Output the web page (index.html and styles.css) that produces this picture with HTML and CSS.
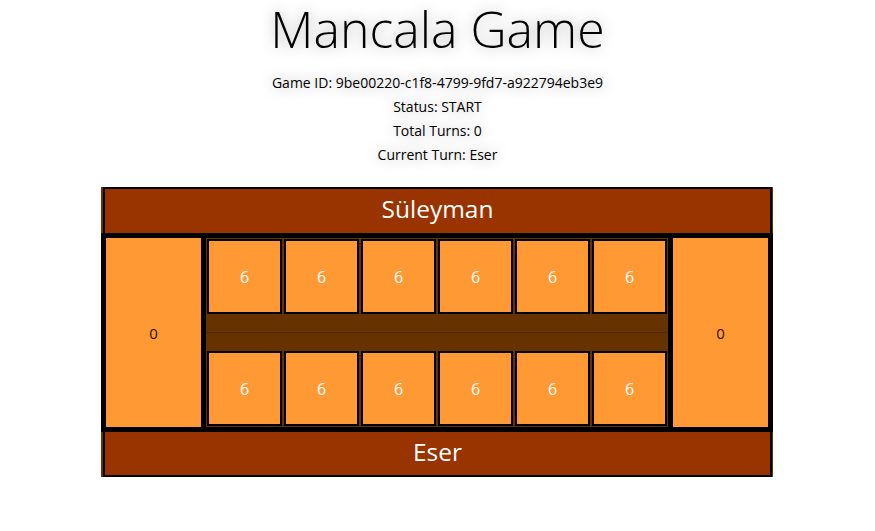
FILE: index.html
```html
<!DOCTYPE html>
<html>
<head>
<meta charset="utf-8">
<title>Mancala Game</title>
<link rel="stylesheet" href="styles.css">
</head>
<body>
<div class="top">
  <h1 class="title">Mancala Game</h1>
  <div class="info">
    <div class="line">Game ID: 9be00220-c1f8-4799-9fd7-a922794eb3e9</div>
    <div class="line">Status: START</div>
    <div class="line">Total Turns: 0</div>
    <div class="line">Current Turn: Eser</div>
  </div>
</div>
<div class="board">
  <div class="player-wrap">
    <div class="player player-top">Süleyman</div>
  </div>
  <div class="middle">
    <div class="store store-left">0</div>
    <div class="pits">
      <div class="pit-row">
        <div class="pit">6</div><div class="pit">6</div><div class="pit">6</div><div class="pit">6</div><div class="pit">6</div><div class="pit">6</div>
      </div>
      <div class="divider"></div>
      <div class="pit-row">
        <div class="pit">6</div><div class="pit">6</div><div class="pit">6</div><div class="pit">6</div><div class="pit">6</div><div class="pit">6</div>
      </div>
    </div>
    <div class="store store-right">0</div>
  </div>
  <div class="player-wrap">
    <div class="player player-bottom">Eser</div>
  </div>
</div>
</body>
</html>
```
FILE: styles.css
```css
* { box-sizing: border-box; }
body {
  margin: 0;
  font-family: "Open Sans", "Noto Sans", sans-serif;
  background: #fff;
  color: #000;
}
.top {
  text-align: center;
  text-shadow: 0 0 14px rgba(0, 0, 0, 0.35);
}
.title {
  margin: 0;
  font-size: 50px;
  font-weight: 300;
  line-height: 58px;
}
.info {
  margin-top: 13px;
  font-size: 14px;
}
.line {
  line-height: 24px;
}
.board {
  width: 673px;
  padding-right: 1px;
  margin: 20px auto 0;
}
.player-wrap {
  background: #663300;
  padding: 0 1px 0 2px;
}
.player {
  background: #993300;
  color: #fff;
  border-left: 2px solid #000;
  border-right: 2px solid #000;
  text-align: center;
  font-size: 24.5px;
  display: flex;
  align-items: center;
  justify-content: center;
}
.player-top {
  border-top: 2px solid #000;
  height: 46px;
  padding-bottom: 6px;
}
.player-bottom {
  border-bottom: 2px solid #000;
  height: 45px;
  padding-bottom: 4px;
}
.middle {
  display: flex;
  border: 5px solid #000;
  background: #000;
}
.store {
  width: 100px;
  height: 189px;
  background: #ff9933;
  color: #2a1200;
  font-size: 15px;
  display: flex;
  align-items: center;
  justify-content: center;
}
.store-left {
  border-right: 5px solid #000;
}
.store-right {
  border-left: 5px solid #000;
}
.pits {
  width: 462px;
  height: 189px;
  background: #663300;
  display: flex;
  flex-direction: column;
}
.pit-row {
  display: flex;
}
.pit {
  width: 75px;
  height: 75px;
  margin: 1px;
  border: 2px solid #000;
  background: #ff9933;
  color: #fff;
  font-size: 16px;
  display: flex;
  align-items: center;
  justify-content: center;
}
.divider {
  height: 1px;
  margin: 17px 0;
  background: #4d2908;
}
```
